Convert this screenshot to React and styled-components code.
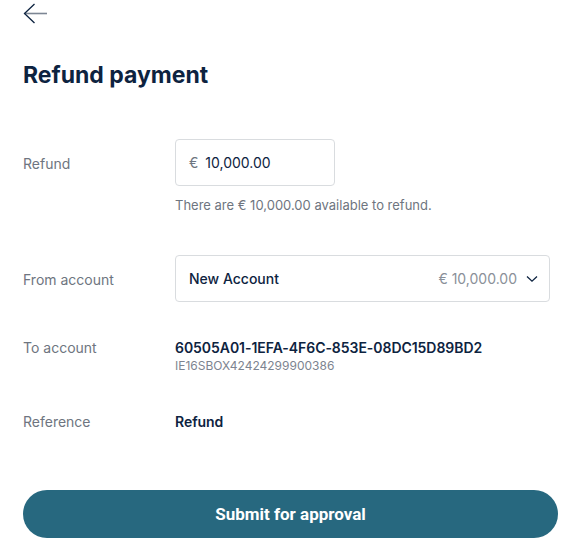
import React from 'react';
import styled, { createGlobalStyle } from 'styled-components';

const GlobalStyle = createGlobalStyle`
  body {
    margin: 0;
    background: #fff;
    font-family: Inter, "Noto Sans", sans-serif;
    color: #0d2340;
  }
`;

export default function App() {
  return (
    <>
      <GlobalStyle />
      <Page>
        <BackButton aria-label="Back">
          <svg width="25" height="22" viewBox="0 0 25 22" fill="none">
            <path d="M24 10.5H1.5" stroke="#7d8694" strokeWidth="1.6" />
            <path d="M11.5 1L1.5 10.5L11.5 20" stroke="#0d2340" strokeWidth="1.3" />
          </svg>
        </BackButton>

        <Title>Refund payment</Title>

        <Row $top={49}>
          <Label $offset={15}>Refund</Label>
          <Field>
            <AmountInput>
              <Currency>€</Currency>
              <span>10,000.00</span>
            </AmountInput>
            <Hint>There are € 10,000.00 available to refund.</Hint>
          </Field>
        </Row>

        <Row $top={41}>
          <Label $offset={15}>From account</Label>
          <Select>
            <SelectName>New Account</SelectName>
            <SelectAmount>€ 10,000.00</SelectAmount>
            <svg width="12" height="8" viewBox="0 0 12 8" fill="none">
              <path d="M1 1.5L6 6.2L11 1.5" stroke="#0d2340" strokeWidth="1.3" />
            </svg>
          </Select>
        </Row>

        <Row $top={36}>
          <Label>To account</Label>
          <Field>
            <Value>60505A01-1EFA-4F6C-853E-08DC15D89BD2</Value>
            <SubValue>IE16SBOX42424299900386</SubValue>
          </Field>
        </Row>

        <Row $top={38}>
          <Label>Reference</Label>
          <Value>Refund</Value>
        </Row>

        <SubmitButton>Submit for approval</SubmitButton>
      </Page>
    </>
  );
}

const Page = styled.main`
  display: flex;
  flex-direction: column;
  padding: 0 15px 10px 23px;
`;

const BackButton = styled.button`
  align-self: flex-start;
  display: flex;
  align-items: center;
  height: 28px;
  padding: 0;
  margin: 0;
  border: none;
  background: none;
  cursor: pointer;
`;

const Title = styled.h1`
  margin: 32px 0 0;
  font-size: 23px;
  line-height: 30px;
  font-weight: 700;
  color: #0d2340;
`;

const Row = styled.div`
  display: grid;
  grid-template-columns: 152px 1fr;
  align-items: start;
  margin-top: ${(p) => p.$top}px;
`;

const Label = styled.div`
  padding-top: ${(p) => p.$offset || 0}px;
  font-size: 14px;
  line-height: 20px;
  color: #6e7580;
`;

const Field = styled.div`
  display: flex;
  flex-direction: column;
`;

const AmountInput = styled.div`
  box-sizing: border-box;
  width: 160px;
  height: 47px;
  display: flex;
  align-items: center;
  gap: 7px;
  padding: 0 13px;
  border: 1px solid #d9dcdf;
  border-radius: 4px;
  font-size: 14px;
  color: #0d2340;
`;

const Currency = styled.span`
  color: #6e7580;
`;

const Hint = styled.div`
  margin-top: 10px;
  font-size: 13px;
  line-height: 18px;
  color: #6e7580;
`;

const Select = styled.div`
  box-sizing: border-box;
  width: 375px;
  height: 47px;
  display: flex;
  align-items: center;
  padding: 0 11px 0 13px;
  border: 1px solid #d9dcdf;
  border-radius: 4px;
  font-size: 14px;
`;

const SelectName = styled.span`
  flex: 1;
  font-weight: 500;
  color: #0d2340;
`;

const SelectAmount = styled.span`
  color: #8a9099;
  margin-right: 9px;
`;

const Value = styled.div`
  font-size: 14px;
  line-height: 20px;
  font-weight: 600;
  letter-spacing: -0.05px;
  color: #0d2340;
`;

const SubValue = styled.div`
  font-size: 12px;
  line-height: 16px;
  color: #7d8490;
`;

const SubmitButton = styled.button`
  margin-top: 58px;
  height: 48px;
  border: none;
  border-radius: 24px;
  background: #27687f;
  color: #fff;
  font-family: Roboto, Inter, sans-serif;
  font-size: 17px;
  font-weight: 700;
  cursor: pointer;
`;
